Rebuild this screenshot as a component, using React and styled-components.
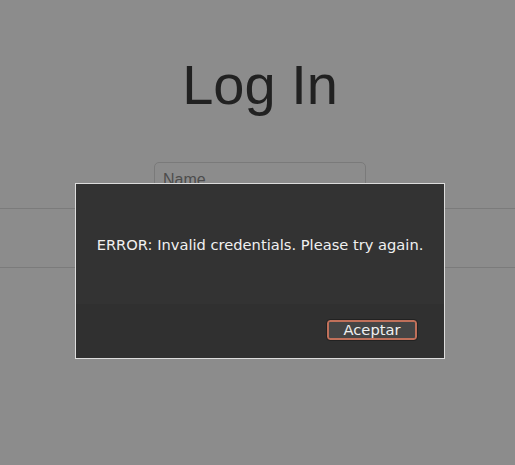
import React from "react";
import styled, { createGlobalStyle } from "styled-components";

const Global = createGlobalStyle`
  html, body { margin: 0; padding: 0; background: #8c8c8c; }
  body { font-family: "Liberation Sans", Arial, sans-serif; }
`;

const Page = styled.div`
  width: 515px;
  height: 465px;
  position: relative;
  overflow: hidden;
  background: #8c8c8c;
  display: flex;
  flex-direction: column;
  align-items: center;
`;

const Title = styled.h1`
  margin: 51px 0 0 5px;
  font-size: 56px;
  font-weight: 400;
  line-height: 67px;
  color: #212121;
`;

const Input = styled.div`
  margin-top: 44px;
  width: 212px;
  height: 36px;
  border: 1px solid #7a7a7a;
  border-radius: 5px;
  box-sizing: border-box;
  padding: 8px 8px;
  font-size: 16px;
  color: #4d4d4d;
  margin-left: 5px;
`;

const Rule = styled.div`
  position: absolute;
  left: 0;
  right: 0;
  height: 1px;
  background: #7b7b7b;
  top: ${(p) => p.$top}px;
`;

const Dialog = styled.div`
  position: absolute;
  left: 75px;
  top: 183px;
  width: 370px;
  height: 176px;
  box-sizing: border-box;
  border: 1px solid #dcdcdc;
  background: #333333;
  display: flex;
  flex-direction: column;
  font-family: "DejaVu Sans", sans-serif;
`;

const Body = styled.div`
  height: 120px;
  display: flex;
  align-items: center;
  justify-content: center;
  color: #f0f0f0;
  font-size: 11pt;
`;

const Footer = styled.div`
  flex: 1;
  background: #303030;
  display: flex;
  justify-content: flex-end;
  align-items: center;
  padding: 0 27px 0 0;
`;

const Button = styled.button`
  width: 90px;
  height: 20px;
  box-sizing: border-box;
  border: 2px solid #c0705a;
  outline: 1px solid #222;
  border-radius: 3px;
  background: #454545;
  color: #f0f0f0;
  font-family: "DejaVu Sans", sans-serif;
  font-size: 11pt;
  line-height: 14px;
  padding: 0;
  margin-top: -3px;
`;

export default function App() {
  return (
    <Page>
      <Global />
      <Title>Log In</Title>
      <Input>Name</Input>
      <Rule $top={208} />
      <Rule $top={267} />
      <Dialog>
        <Body>ERROR: Invalid credentials. Please try again.</Body>
        <Footer>
          <Button>Aceptar</Button>
        </Footer>
      </Dialog>
    </Page>
  );
}
